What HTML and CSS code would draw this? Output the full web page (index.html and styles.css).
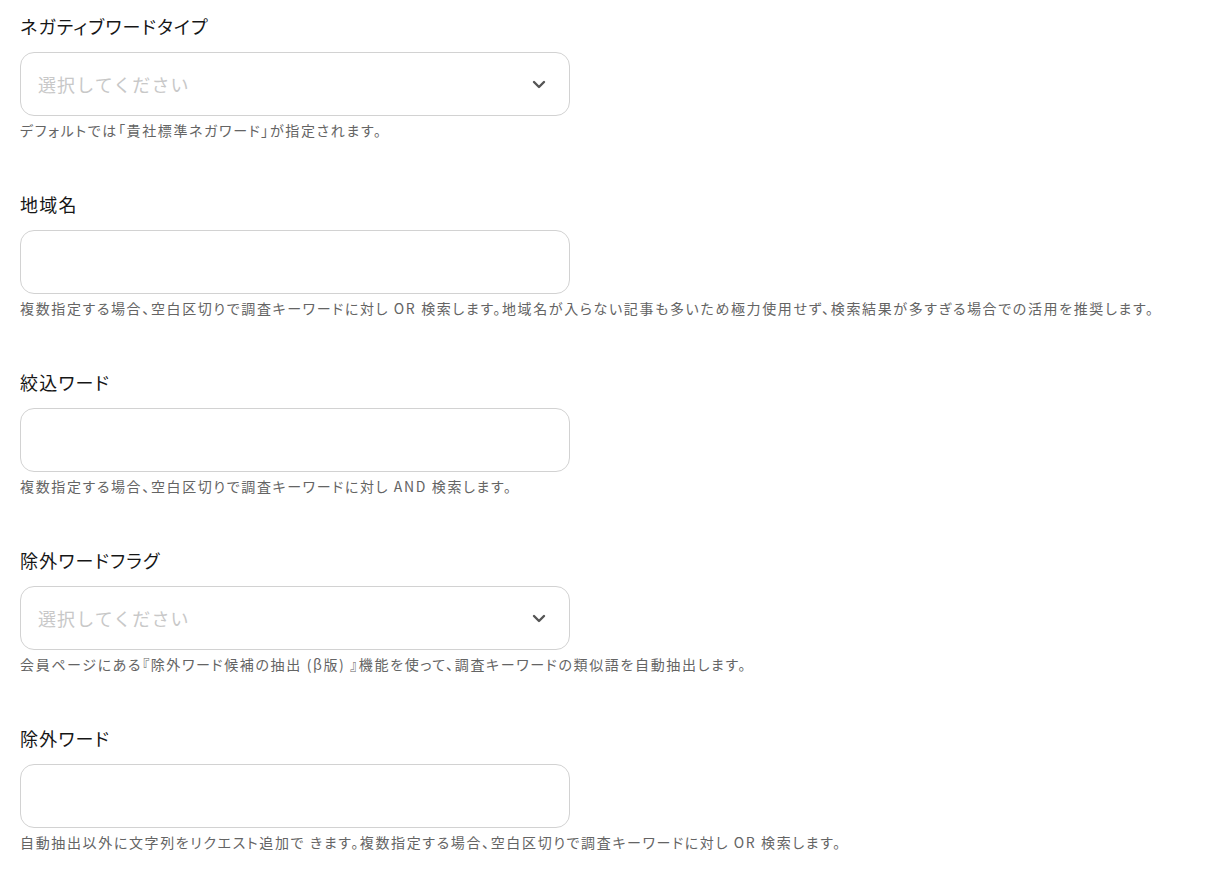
FILE: index.html
```html
<!DOCTYPE html>
<html lang="ja">
<head>
<meta charset="utf-8">
<link rel="stylesheet" href="styles.css">
</head>
<body>
<div class="form">
  <div class="field">
    <div class="label">ネガティブワードタイプ</div>
    <div class="box select">
      <span class="placeholder">選択してください</span>
      <svg class="chev" width="14" height="9" viewBox="0 0 14 9"><path d="M2 2 L7 7 L12 2" fill="none" stroke="#555" stroke-width="2.4" stroke-linecap="round" stroke-linejoin="round"/></svg>
    </div>
    <div class="help">デフォルトでは「貴社標準ネガワード」が指定されます。</div>
  </div>
  <div class="field">
    <div class="label">地域名</div>
    <div class="box"></div>
    <div class="help">複数指定する場合、空白区切りで調査キーワードに対し OR 検索します。地域名が入らない記事も多いため極力使用せず、検索結果が多すぎる場合での活用を推奨します。</div>
  </div>
  <div class="field">
    <div class="label">絞込ワード</div>
    <div class="box"></div>
    <div class="help">複数指定する場合、空白区切りで調査キーワードに対し AND 検索します。</div>
  </div>
  <div class="field">
    <div class="label">除外ワードフラグ</div>
    <div class="box select">
      <span class="placeholder">選択してください</span>
      <svg class="chev" width="14" height="9" viewBox="0 0 14 9"><path d="M2 2 L7 7 L12 2" fill="none" stroke="#555" stroke-width="2.4" stroke-linecap="round" stroke-linejoin="round"/></svg>
    </div>
    <div class="help">会員ページにある『除外ワード候補の抽出 (β版) 』機能を使って、調査キーワードの類似語を自動抽出します。</div>
  </div>
  <div class="field">
    <div class="label">除外ワード</div>
    <div class="box"></div>
    <div class="help">自動抽出以外に文字列をリクエスト追加で きます。複数指定する場合、空白区切りで調査キーワードに対し OR 検索します。</div>
  </div>
</div>
</body>
</html>
```

FILE: styles.css
```css
html, body {
  margin: 0;
  padding: 0;
  background: #fff;
}
body {
  font-family: "Noto Sans CJK JP", "Noto Sans", sans-serif;
  color: #222;
}
.form {
  padding: 13px 20px 0 20px;
  display: flex;
  flex-direction: column;
  gap: 51px;
}
.field {
  display: flex;
  flex-direction: column;
  width: 1180px;
}
.label {
  font-size: 18px;
  line-height: 26px;
  font-weight: 400;
  color: #161616;
  letter-spacing: 1.2px;
  font-feature-settings: "palt";
}
.box {
  margin-top: 13px;
  width: 550px;
  height: 64px;
  box-sizing: border-box;
  border: 1px solid #d2d2d2;
  border-radius: 14px;
  background: #fff;
}
.select {
  display: flex;
  align-items: center;
  justify-content: space-between;
  padding: 0 23px 0 17px;
}
.placeholder {
  font-size: 18px;
  color: #c8c8c8;
  letter-spacing: 0.06em;
}
.chev {
  display: block;
}
.help {
  margin-top: 4px;
  font-size: 14px;
  line-height: 20px;
  color: #646464;
  letter-spacing: 1.63px;
  font-feature-settings: "palt";
  white-space: nowrap;
}
```
